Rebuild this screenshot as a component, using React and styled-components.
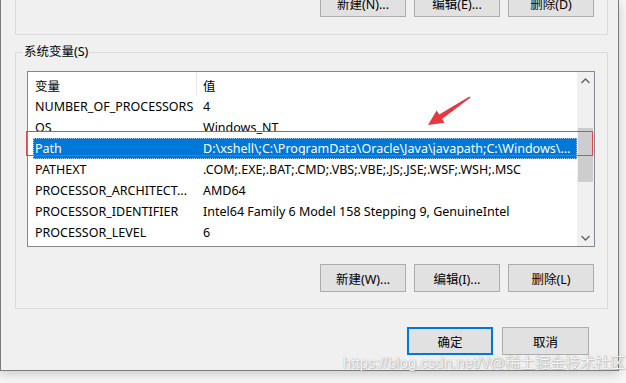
import React from "react";
import styled, { createGlobalStyle } from "styled-components";

const rows = [
  { name: "NUMBER_OF_PROCESSORS", value: "4" },
  { name: "OS", value: "Windows_NT" },
  {
    name: "Path",
    value: "D:\\xshell\\;C:\\ProgramData\\Oracle\\Java\\javapath;C:\\Windows\\...",
    selected: true,
  },
  { name: "PATHEXT", value: ".COM;.EXE;.BAT;.CMD;.VBS;.VBE;.JS;.JSE;.WSF;.WSH;.MSC" },
  { name: "PROCESSOR_ARCHITECT...", value: "AMD64" },
  { name: "PROCESSOR_IDENTIFIER", value: "Intel64 Family 6 Model 158 Stepping 9, GenuineIntel" },
  { name: "PROCESSOR_LEVEL", value: "6" },
];

const App = () => {
  return (
    <Page>
      <GlobalStyle />
      <Dialog>
        <UserGroup>
          <ButtonRow>
            <Button>新建(N)...</Button>
            <Button>编辑(E)...</Button>
            <Button>删除(D)</Button>
          </ButtonRow>
        </UserGroup>

        <SystemGroup>
          <Legend>系统变量(S)</Legend>
          <ListBox>
            <Table>
              <HeaderRow>
                <HeaderCell>变量</HeaderCell>
                <HeaderCell $last>值</HeaderCell>
              </HeaderRow>
              {rows.map((row) => (
                <Row key={row.name} $selected={row.selected}>
                  <NameCell>{row.name}</NameCell>
                  <ValueCell>{row.value}</ValueCell>
                </Row>
              ))}
            </Table>
            <ScrollBar>
              <ScrollArrow>
                <svg width="9" height="6" viewBox="0 0 9 6">
                  <path d="M0.5 5 L4.5 1 L8.5 5" fill="none" stroke="#606060" strokeWidth="1.3" />
                </svg>
              </ScrollArrow>
              <Track>
                <Thumb />
              </Track>
              <ScrollArrow>
                <svg width="9" height="6" viewBox="0 0 9 6">
                  <path d="M0.5 1 L4.5 5 L8.5 1" fill="none" stroke="#606060" strokeWidth="1.3" />
                </svg>
              </ScrollArrow>
            </ScrollBar>
          </ListBox>
          <GroupButtons>
            <Button>新建(W)...</Button>
            <Button>编辑(I)...</Button>
            <Button>删除(L)</Button>
          </GroupButtons>
        </SystemGroup>

        <Footer>
          <Button $default>确定</Button>
          <Button $wide>取消</Button>
        </Footer>
      </Dialog>

      {/* annotation overlays */}
      <Highlight />
      <Arrow width="50" height="35" viewBox="0 0 50 35">
        <polygon
          points="3,32 19.5,29.8 17,26 45.6,4.6 44.4,3.4 14.2,21.6 11.6,17.6"
          fill="#e8383d"
        />
      </Arrow>
      <Watermark>https://blog.csdn.net/\/@稀土掘金技术社区</Watermark>
    </Page>
  );
};

export default App;

const GlobalStyle = createGlobalStyle`
  html, body {
    margin: 0;
    padding: 0;
    background: #f6f6f6;
  }
  body {
    font-family: "Noto Sans", "Noto Sans CJK SC", sans-serif;
    font-size: 12.5px;
    color: #000;
  }
`;

const Page = styled.div`
  position: relative;
  width: 626px;
  height: 383px;
  overflow: hidden;
`;

const Dialog = styled.div`
  box-sizing: border-box;
  width: 619px;
  height: 371px;
  background: #f0f0f0;
  border: 1px solid #7a7a7a;
  border-top: none;
  padding: 0 10px 0 14px;
  display: flex;
  flex-direction: column;
  box-shadow: 0 3px 10px rgba(0, 0, 0, 0.18);
`;

const UserGroup = styled.div`
  box-sizing: border-box;
  height: 35px;
  border: 1px solid #dcdcdc;
  border-top: none;
  display: flex;
  align-items: flex-end;
  justify-content: flex-end;
  padding: 0 13px 17px 0;
`;

const ButtonRow = styled.div`
  display: flex;
  gap: 8px;
`;

const Button = styled.button`
  box-sizing: border-box;
  width: ${(p) => (p.$wide ? "87px" : "86px")};
  height: 28px;
  margin: 0;
  padding: 0;
  background: #e1e1e1;
  border: ${(p) => (p.$default ? "2px solid #0078d7" : "1px solid #adadad")};
  font-family: "Noto Sans", "Noto Sans CJK SC", sans-serif;
  font-size: 12.5px;
  color: #000;
  display: flex;
  align-items: center;
  justify-content: center;
`;

const SystemGroup = styled.div`
  position: relative;
  box-sizing: border-box;
  margin-top: 17px;
  height: 257px;
  border: 1px solid #dcdcdc;
  padding: 18px 13px 0 11px;
  display: flex;
  flex-direction: column;
`;

const Legend = styled.span`
  position: absolute;
  top: -9px;
  left: 7px;
  padding: 0 1px;
  background: #f0f0f0;
  font-size: 12.5px;
  line-height: 16px;
`;

const ListBox = styled.div`
  box-sizing: border-box;
  height: 176px;
  margin-right: -1px;
  border: 1px solid #828790;
  background: #fff;
  display: flex;
  overflow: hidden;
`;

const Table = styled.div`
  flex: 1;
  display: flex;
  flex-direction: column;
  padding-left: 5px;
`;

const HeaderRow = styled.div`
  display: grid;
  grid-template-columns: 164px 1fr;
  height: 24px;
  align-items: stretch;
`;

const HeaderCell = styled.div`
  display: flex;
  align-items: center;
  padding-left: ${(p) => (p.$last ? "6px" : "2px")};
  border-right: ${(p) => (p.$last ? "none" : "1px solid #e5e5e5")};
  padding-top: 2px;
`;

const Row = styled.div`
  display: grid;
  grid-template-columns: 164px 1fr;
  height: 21px;
  align-items: center;
  white-space: nowrap;
  background: ${(p) => (p.$selected ? "#0078d7" : "transparent")};
  color: ${(p) => (p.$selected ? "#fff" : "#000")};
  outline: ${(p) => (p.$selected ? "1px dotted #9cc8f0" : "none")};
  outline-offset: -1px;
`;

const NameCell = styled.div`
  padding-left: 2px;
  overflow: hidden;
`;

const ValueCell = styled.div`
  padding-left: 6px;
  overflow: hidden;
`;

const ScrollBar = styled.div`
  width: 17px;
  background: #f0f0f0;
  display: flex;
  flex-direction: column;
`;

const ScrollArrow = styled.div`
  height: 17px;
  display: flex;
  align-items: center;
  justify-content: center;
`;

const Track = styled.div`
  flex: 1;
  padding-top: 39px;
`;

const Thumb = styled.div`
  height: 54px;
  margin: 0 1px;
  background: #cdcdcd;
`;

const GroupButtons = styled.div`
  display: flex;
  justify-content: flex-end;
  gap: 8px;
  margin-top: 17px;
`;

const Footer = styled.div`
  display: flex;
  justify-content: flex-end;
  gap: 9px;
  margin-top: 18px;
  padding-right: 19px;
`;

const Highlight = styled.div`
  position: absolute;
  left: 26px;
  top: 131px;
  width: 567px;
  height: 25px;
  border: 1px solid #e0474c;
  box-sizing: border-box;
`;

const Arrow = styled.svg`
  position: absolute;
  left: 425px;
  top: 93px;
`;

const Watermark = styled.div`
  position: absolute;
  left: 343px;
  top: 354px;
  font-family: "Liberation Sans", "Noto Sans CJK SC", sans-serif;
  font-size: 15px;
  line-height: 18px;
  color: rgba(255, 255, 255, 0.9);
  text-shadow: 0 0 1px rgba(120, 120, 120, 0.7), 1px 1px 1px rgba(160, 160, 160, 0.5);
  white-space: nowrap;
`;
